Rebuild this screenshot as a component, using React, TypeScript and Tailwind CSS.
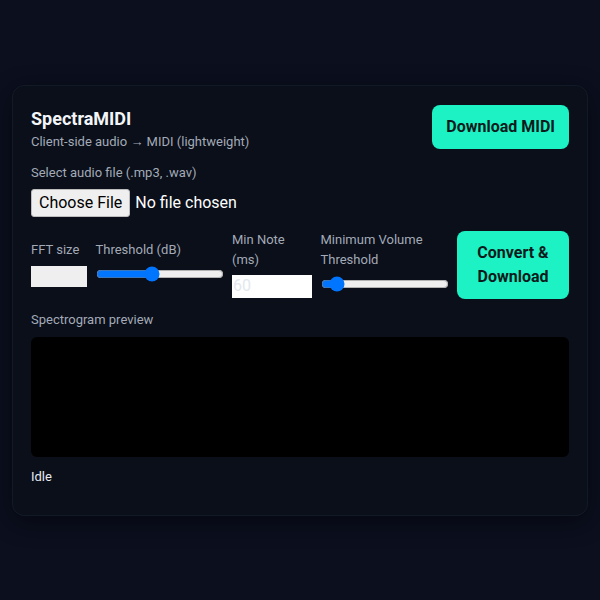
import React from 'react';

export default function App() {
  return (
    <div
      className="min-h-screen w-full flex items-center justify-center px-3 bg-[#0b0f1e]"
      style={{ fontFamily: 'Roboto, "Noto Sans", sans-serif' }}
    >
      <div className="w-full rounded-xl border border-[#131a27] bg-[#0a0f1a] px-[18px] pt-[19px] pb-[28px] shadow-[0_6px_24px_rgba(0,0,0,0.45)]">
        <div className="flex items-start justify-between">
          <div>
            <h1 className="text-lg leading-7 font-bold text-[#f3f5f8]">SpectraMIDI</h1>
            <p className="text-[13px] leading-[18px] text-[#a3aab6]">Client-side audio → MIDI (lightweight)</p>
          </div>
          <button className="h-[44px] px-[14px] rounded-lg bg-[#1cf2c4] text-[#0c1a1b] font-bold text-base">
            Download MIDI
          </button>
        </div>

        <label className="block mt-[12px] text-[13px] leading-5 text-[#a3aab6]">Select audio file (.mp3, .wav)</label>
        <input
          type="file"
          className="mt-[6px] block h-[28px] text-base leading-5 text-white file:mr-[5px] file:h-[28px] file:rounded-[3px] file:border file:border-solid file:border-[#bdbdbd] file:bg-[#efefef] file:px-[7px] file:py-0 file:text-base file:text-black"
          style={{ fontFamily: 'inherit' }}
        />

        <div className="mt-[13px] flex items-start gap-[8.5px]">
          <div className="mt-[10px] flex flex-col w-[56px]">
            <span className="text-[13px] leading-5 text-[#a3aab6] whitespace-nowrap">FFT size</span>
            <div className="mt-[6px] h-[21px] w-[56px] bg-[#efefef]" />
          </div>
          <div className="mt-[10px] flex flex-col w-[128px]">
            <span className="text-[13px] leading-5 text-[#a3aab6] whitespace-nowrap">Threshold (dB)</span>
            <input type="range" min={-100} max={0} defaultValue={-57} className="mt-[6px] h-[16px] w-[128px] m-0" />
          </div>
          <div className="flex flex-col w-[80px]">
            <span className="text-[13px] leading-5 text-[#a3aab6]">Min Note (ms)</span>
            <input
              type="number"
              defaultValue={60}
              className="mt-[5px] h-[23px] w-[80px] bg-white px-[1px] text-base text-[#e3e8ee] outline-none"
            />
          </div>
          <div className="flex flex-col w-[128px]">
            <span className="text-[13px] leading-5 text-[#a3aab6]">Minimum Volume Threshold</span>
            <input type="range" min={0} max={100} defaultValue={8} className="mt-[6px] h-[16px] w-[128px] m-0" />
          </div>
          <button className="mt-[1px] h-[68px] w-[112px] rounded-lg bg-[#1cf2c4] text-[#0c1a1b] font-bold text-base leading-6">
            Convert &amp;<br />Download
          </button>
        </div>

        <div className="mt-[11px] text-[13px] leading-5 text-[#a3aab6]">Spectrogram preview</div>
        <div className="mt-[7px] h-[120px] w-full rounded-md bg-black" />
        <div className="mt-[10px] text-[13px] leading-5 text-[#e8ecf1]">Idle</div>
      </div>
    </div>
  );
}
